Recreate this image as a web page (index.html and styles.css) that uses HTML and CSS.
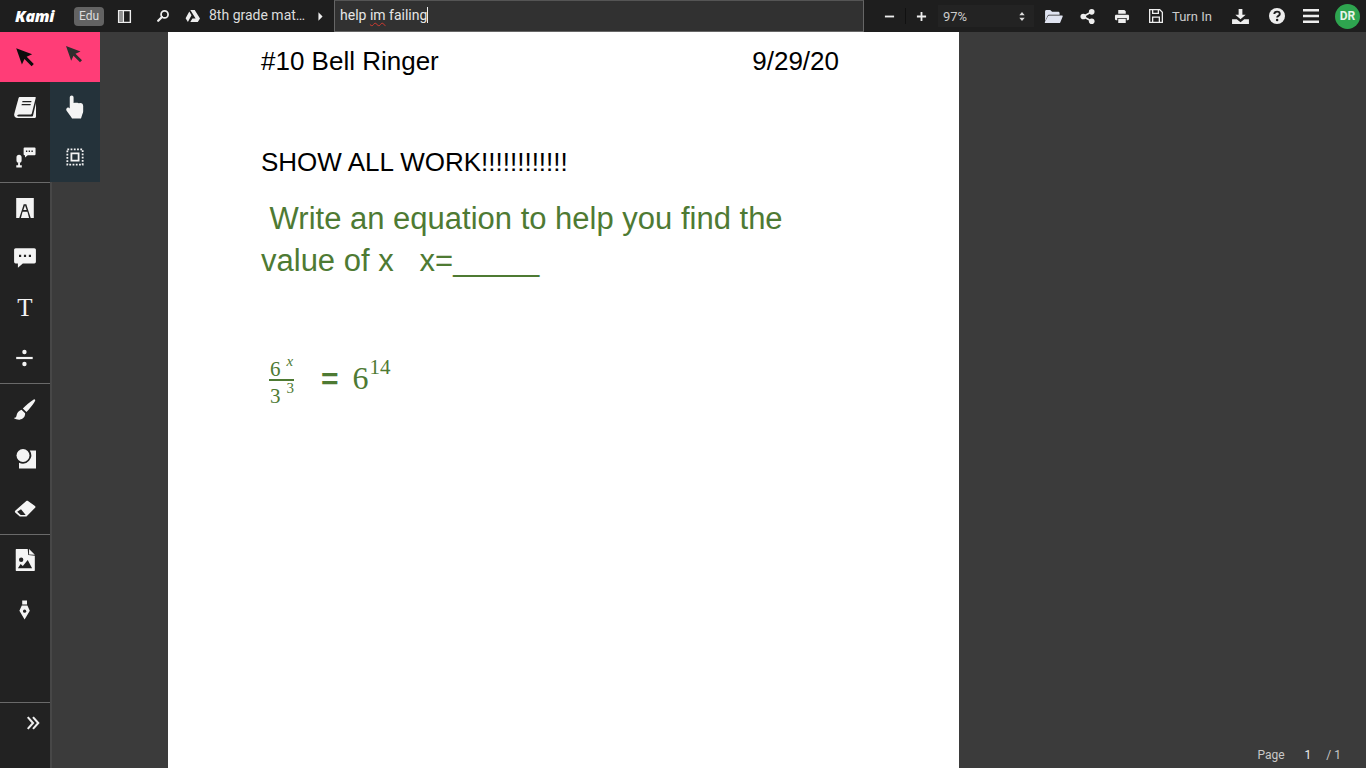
FILE: index.html
```html
<!DOCTYPE html>
<html lang="en">
<head>
<meta charset="utf-8">
<title>Kami</title>
<link rel="stylesheet" href="styles.css">
</head>
<body>
<div class="app">
  <header class="topbar">
    <span class="logo">Kami</span>
    <span class="edu">Edu</span>
    <svg class="ic panel-ic" viewBox="0 0 16 16"><path fill-rule="evenodd" d="M1 1h14v14H1zM2.500 2.500v11H6v-11zM7.500 2.500v11h6v-11z"/><path d="M2.500 2.500H6v11H2.500z" opacity=".55"/></svg>
    <svg class="ic search-ic" viewBox="0 0 16 16"><circle cx="9.800" cy="6.200" r="4" fill="none" stroke="#eee" stroke-width="2"/><path d="M6.800 9.200 2.500 13.500" stroke="#eee" stroke-width="2.600" stroke-linecap="round"/></svg>
    <svg class="ic drive-ic" viewBox="0 0 16 14"><path d="M5.300 1h4.400l5.300 8.500h-4.400zM4.300 2.600l2.200 3.700L2.900 13 .6 9.300zM7.400 9.500H15L12.800 13H5.300z"/></svg>
    <span class="docname">8th grade mat…</span>
    <svg class="ic caret-ic" viewBox="0 0 6 10"><path d="M.5 0 5.500 5 .5 10z"/></svg>
    <div class="titlebox"><span class="squig">help <u>im</u> failing</span><i class="cursor"></i></div>
    <svg class="ic zoom-ic" viewBox="0 0 12 12"><path d="M1 5h10v2H1z"/></svg>
    <i class="zoomsep"></i>
    <svg class="ic zoom-ic" viewBox="0 0 12 12"><path d="M5 1h2v4h4v2H7v4H5V7H1V5h4z"/></svg>
    <div class="zoomsel"><span>97%</span><svg class="updown" viewBox="0 0 6 10"><path d="M3 0 6 3.500H0zM3 10 0 6.500h6z"/></svg></div>
    <svg class="ic folder-ic" viewBox="0 0 20 16"><path d="M1 13V2.500C1 1.700 1.700 1 2.500 1h4L8.500 3H15c.8 0 1.500.7 1.500 1.500V6H5.500C4.700 6 4 6.500 3.700 7.200z"/><path d="M5 7h14c.6 0 1 .5.800 1.100l-2.600 6.200c-.2.400-.6.700-1 .7H1.500c-.6 0-1-.6-.7-1.100l3.200-6.300C4.200 7.200 4.600 7 5 7z"/></svg>
    <svg class="ic share-ic" viewBox="0 0 16 16"><circle cx="12.500" cy="3" r="3"/><circle cx="3.500" cy="8" r="3"/><circle cx="12.500" cy="13" r="3"/><path d="M12.500 3 3.500 8l9 5" fill="none" stroke="#eee" stroke-width="1.800"/></svg>
    <svg class="ic print-ic" viewBox="0 0 16 16"><path d="M4 1h6.500L12 2.500V5H4zM1.800 6h12.400c.7 0 1.300.6 1.300 1.300v3.400c0 .7-.6 1.300-1.300 1.300H13V9.500H3V12H1.800c-.7 0-1.300-.6-1.300-1.300V7.300C.5 6.600 1.100 6 1.800 6zM4 10.500h8V15H4z"/></svg>
    <svg class="ic save-ic" viewBox="0 0 16 16"><path fill-rule="evenodd" d="M1 1h11l3 3v11H1zM2.300 2.300v11.400h1.700V8.500h8v5.200h1.700V4.600l-2.300-2.300H11v3.700H4V2.300zM5.300 2.300v2.400h4.400V2.300zM5.300 9.800v3.900h5.400V9.800z"/></svg>
    <span class="turnin">Turn In</span>
    <svg class="ic dl-ic" viewBox="0 0 18 16"><path d="M7 0h4v6h3.500L9 11 3.500 6H7zM0 11h5l4 3 4-3h5v5H0z"/></svg>
    <svg class="ic help-ic" viewBox="0 0 16 16"><circle cx="8" cy="8" r="8"/><path d="M5.300 6c.1-1.600 1.300-2.400 2.800-2.400S10.800 4.500 10.800 6c0 1.900-2.700 1.900-2.700 3.600" fill="none" stroke="#1e1e1e" stroke-width="1.900"/><circle cx="8.100" cy="12" r="1.250" fill="#1e1e1e"/></svg>
    <svg class="ic bars-ic" viewBox="0 0 16 14"><path d="M0 0h16v2.600H0zM0 5.700h16v2.600H0zM0 11.400h16V14H0z"/></svg>
    <span class="avatar">DR</span>
  </header>
  <div class="workspace">
    <nav class="sidebar">
      <div class="btn active"><svg class="tool" viewBox="0 0 20 20"><path class="dark" d="M2 2l14.500 5.500-5 2.300 6.500 6.500-2 2-6.500-6.500-2.300 5z"/></svg></div>
      <div class="group">
        <div class="btn"><svg class="tool big" viewBox="0 0 24 24"><path d="M7 2h15c.6 0 .9.500.7 1l-3.900 15.500c-.2.600-.6.900-1.200.9H6c-1.300 0-1.800.9-1.800 1.300S4.700 21.400 6 21.400h13.200c.3 0 .6-.2.700-.5l3.100-13v13.600c0 .8-.6 1.500-1.400 1.500H4.500C2.500 23 1 21.600 1.200 19.800 1.300 18.600 5.500 3.800 5.500 3.200 5.700 2.500 6.300 2 7 2z"/><path class="cut" d="M9.500 6h9l-.3 1.300h-9zM8.800 9h9l-.3 1.300h-9z"/></svg></div>
        <div class="btn"><svg class="tool" viewBox="0 0 24 24"><path d="M5.500 9.500c1.700 0 2.800 1.300 2.800 2.800v3.400c0 1.600-1.100 2.800-2.800 2.800s-2.800-1.200-2.800-2.800v-3.400c0-1.500 1.100-2.800 2.800-2.800zM4.500 18.500h2V21h2v2.500H2.500V21h2z"/><path d="M11.500 1.500h11c.6 0 1 .4 1 1V9c0 .6-.4 1-1 1h-7.500l-3 2.500V10h-.5c-.6 0-1-.4-1-1V2.500c0-.6.400-1 1-1z"/><path class="cut" d="M13 5h1.500v1.500H13zM16 5h1.500v1.500H16zM19 5h1.500v1.500H19z"/></svg></div>
      </div>
      <i class="rule"></i>
      <div class="group">
        <div class="btn"><svg class="tool" viewBox="0 0 20 20"><path fill-rule="evenodd" d="M2 1h16v18h-2.800L12.400 10.500 11.200 6.500H8.800L7.600 10.500 4.800 19H2zM6.300 19h7.400l-1.500-5.500H7.800zM8.500 11.800h3L10 7.500z"/></svg></div>
        <div class="btn"><svg class="tool big" viewBox="0 0 22 20"><path fill-rule="evenodd" d="M2.500 1h17C20.500 1 21 1.700 21 2.500v11c0 .8-.5 1.500-1.500 1.500H9l-4.500 4v-4h-2C1.500 15 1 14.300 1 13.500v-11C1 1.700 1.500 1 2.500 1zM5.500 7v2h2V7zM10 7v2h2V7zM14.500 7v2h2V7z"/></svg></div>
        <div class="btn"><span class="t-glyph">T</span></div>
        <div class="btn"><svg class="tool" viewBox="0 0 20 20"><circle cx="9.500" cy="4.500" r="2"/><path d="M2 9h15v2H2z"/><circle cx="9.500" cy="15.500" r="2"/></svg></div>
      </div>
      <i class="rule"></i>
      <div class="group">
        <div class="btn"><svg class="tool big" viewBox="0 0 22 22"><path d="M19 2.200c.8-.5 1.700.4 1.300 1.200-1.800 3.400-5.500 8-8 10.400L9 10.500C11.500 8 15.700 4.200 19 2.200zM7.800 11.700l3.300 3.300c.2 3-1.800 5.600-5.100 5.800-1.800.1-3.900-.5-5.300-1.500 1.400 0 2.300-.6 2.500-2 .3-2.600 2-4.900 4.600-5.600z"/></svg></div>
        <div class="btn"><svg class="tool shape" viewBox="0 0 22 22"><path d="M14.800 2.500H21v18H4V14.800A8.500 8.500 0 0 0 14.800 2.500z"/><circle cx="8" cy="7.500" r="6.500"/></svg></div>
        <div class="btn"><svg class="tool" viewBox="0 0 22 22"><path fill-rule="evenodd" d="M14 3 21 8c.6.500.6 1.200.1 1.700L12.500 18.500H5.800L1.200 14.400c-.5-.5-.5-1.200 0-1.700L12.300 3.100C12.800 2.600 13.500 2.600 14 3zM7 11.300 3.200 13.700l3.500 3.200h5z"/></svg></div>
      </div>
      <i class="rule"></i>
      <div class="group">
        <div class="btn"><svg class="tool big" viewBox="0 0 20 22"><path fill-rule="evenodd" d="M2 1h10.500l.5 5.500 6 .5v13.500c0 .3-.2.500-.5.500h-16.500c-.3 0-.5-.2-.5-.5V1.500C1.500 1.200 1.700 1 2 1zM6.500 8.800a2 2 0 1 0 0 4 2 2 0 0 0 0-4zM12.500 11 8 16.500l-2-1.800-2.500 3.800h13z"/><path d="M13.700 1 19 6.200l-5.300-.2z"/></svg></div>
        <div class="btn"><svg class="tool pen" viewBox="0 0 20 26"><path d="M6.500 1h6v5h-6zM6 7.500h7l3 6.500-6.500 11L3 14z"/><circle class="cut" cx="9.500" cy="14.500" r="2"/></svg></div>
      </div>
      <div class="spacer"></div>
      <i class="rule"></i>
      <div class="expand"><svg class="chev" viewBox="0 0 12 12"><path d="M1.500 1 6 6l-4.500 5M6 1l4.500 5L6 11" fill="none" stroke="#eee" stroke-width="1.800"/></svg></div>
    </nav>
    <aside class="flyout">
      <div class="btn active"><svg class="tool small" viewBox="0 0 20 20"><path class="dim" d="M1 1l14.500 5.500-5 2.300 6.500 6.500-2 2-6.500-6.500-2.300 5z"/></svg></div>
      <div class="panel">
        <div class="btn"><svg class="tool big" viewBox="0 0 20 22"><path d="M7 .5c1 0 1.700.8 1.700 1.800v5l1-.3 1.200.2 1.300-.2 1.300.5 1.500-.1c1.400 0 2.500 1.200 2.500 2.600V15c0 1-.3 1.800-.7 2.500L15.500 21.500H7.300L6.300 20 2.300 14.500c-.6-.9-.4-2 .4-2.600.8-.6 1.900-.4 2.500.4V2.300c0-1 .8-1.800 1.800-1.800z"/></svg></div>
        <div class="btn"><svg class="tool select" viewBox="0 0 20 20"><path fill-rule="evenodd" d="M5 5h10v10H5zM7 7v6h6V7z"/><path class="dots" d="M1.500 1.500h17v17h-17z"/></svg></div>
      </div>
    </aside>
    <main class="canvas">
      <article class="sheet">
        <div class="headline"><span>#10 Bell Ringer</span><span>9/29/20</span></div>
        <p class="show">SHOW ALL WORK!!!!!!!!!!!!</p>
        <p class="question">&nbsp;Write an equation to help you find the<br>value of x &nbsp; x=_____</p>
        <div class="math">
          <div class="frac">
            <span class="num">6<sup class="varx">x</sup></span>
            <span class="den">3<sup>3</sup></span>
          </div>
          <span class="eq">=</span>
          <span class="big-num">6<sup>14</sup></span>
        </div>
      </article>
      <div class="pager"><span>Page</span><b>1</b><span>/ 1</span></div>
    </main>
  </div>
</div>
</body>
</html>
```
FILE: styles.css
```css
* { box-sizing: border-box; }
html, body { margin: 0; height: 100%; overflow: hidden; }
body { font-family: Roboto, "Liberation Sans", sans-serif; background: #3b3b3b; color: #eee; }
.app { display: flex; flex-direction: column; height: 768px; }

.topbar { height: 32px; flex: none; display: flex; align-items: center; background: #1e1e1e; font-size: 13px; color: #dcdcdc; }
.ic { display: block; flex: none; fill: #eee; }
.logo { width: 40px; margin-left: 15px; font: italic 800 16px "Open Sans", sans-serif; color: #fff; letter-spacing: -.3px; }
.edu { margin-left: 19px; width: 30px; height: 19px; line-height: 19px; text-align: center; border-radius: 4px; background: #636363; color: #ddd; font-size: 12px; }
.panel-ic { width: 15px; height: 15px; margin-left: 13px; }
.search-ic { width: 14px; height: 14px; margin-left: 24px; }
.drive-ic { width: 16px; height: 14px; margin-left: 15px; }
.docname { margin-left: 8px; width: 106px; font-size: 14px; white-space: nowrap; padding-bottom: 2px; }
.caret-ic { width: 5px; height: 9px; margin-left: 3px; }
.titlebox { margin-left: 11px; width: 530px; height: 32px; padding: 0 5px 3px; display: flex; align-items: center; background: #313131; border: 1px solid #666; border-top-color: #555; font-size: 14px; color: #e6e6e6; }
.squig u { text-decoration: underline wavy #d0392f 1px; text-underline-offset: 2px; }
.cursor { width: 1px; height: 16px; background: #eee; }
.zoom-ic { width: 11px; height: 11px; margin-left: 20px; }
.zoomsep { width: 1px; height: 16px; margin-left: 10px; background: #111; }
.zoomsep + .zoom-ic { margin-left: 10px; }
.zoomsel { margin-left: 11px; width: 96px; height: 22px; padding: 0 9px 0 5px; display: flex; align-items: center; justify-content: space-between; background: #232323; font-size: 13px; color: #ccc; }
.updown { width: 6px; height: 9px; fill: #ddd; }
.folder-ic { width: 19px; height: 15px; margin-left: 10px; fill: #dfe3f0; }
.share-ic { width: 15px; height: 15px; margin-left: 17px; }
.print-ic { width: 16px; height: 15px; margin-left: 19px; }
.save-ic { width: 16px; height: 16px; margin-left: 18px; }
.turnin { width: 40px; margin-left: 8px; font-size: 13px; white-space: nowrap; color: #ccc; }
.dl-ic { width: 17px; height: 15px; margin-left: 20px; }
.help-ic { width: 16px; height: 16px; margin-left: 20px; }
.bars-ic { width: 16px; height: 14px; margin-left: 18px; }
.avatar { width: 25px; height: 25px; margin-left: 16px; border-radius: 50%; background: #2ea44f; color: #e8f5e9; font-size: 12px; font-weight: 700; line-height: 25px; text-align: center; }

.workspace { flex: 1; display: flex; min-height: 0; }
.sidebar { width: 52px; flex: none; display: flex; flex-direction: column; background: #222; border-right: 2px solid #474747; }
.group { display: flex; flex-direction: column; }
.rule { display: block; height: 1px; flex: none; background: #6a6a6a; }
.spacer { flex: 1; }
.btn { width: 50px; height: 50px; display: flex; align-items: center; justify-content: center; flex: none; }
.btn.active { background: #ff3d77; }
.tool { display: block; width: 22px; height: 22px; fill: #f4f4f4; }
.tool.big { width: 24px; height: 24px; }
.tool.small { width: 20px; height: 20px; margin-top: -4px; }
.tool.shape { margin-left: 2px; }
.tool.pen { width: 16px; height: 24px; }
.tool .dark { fill: #0c0c0c; }
.tool .dim { fill: #2d2d2d; }
.tool .cut { fill: #222; }
.tool.select { width: 18px; height: 18px; }
.tool .dots { fill: none; stroke: #f4f4f4; stroke-width: 2; stroke-dasharray: 2 1.600; }
.t-glyph { font: 25px/1 "Liberation Serif", serif; color: #f4f4f4; margin-top: -2px; }
.expand { height: 65px; padding: 13px 10px 0 0; display: flex; align-items: flex-start; justify-content: flex-end; }
.chev { width: 14px; height: 14px; }
.flyout { width: 50px; margin-left: -2px; flex: none; display: flex; flex-direction: column; }
.panel { background: #24323a; }

.canvas { flex: 1; padding-left: 68px; position: relative; min-width: 0; }
.sheet { width: 791px; height: 736px; background: #fff; padding: 0 0 0 93px; font-family: "Liberation Sans", sans-serif; color: #000; }
.headline { width: 578px; display: flex; justify-content: space-between; padding-top: 12px; font-size: 26px; line-height: 34px; }
.show { margin: 67px 0 0; font-size: 26px; line-height: 34px; }
.question { margin: 19px 0 0; font-size: 31px; line-height: 42px; color: #4e7a33; }
.math { margin-top: 74px; margin-left: 8px; display: flex; align-items: center; font-family: "Liberation Serif", serif; color: #4e7a33; }
.frac { width: 25px; display: flex; flex-direction: column; font-size: 21px; }
.num { height: 25px; padding-left: 1px; line-height: 26px; border-bottom: 2px solid #4e7a33; }
.den { height: 26px; padding-left: 1px; line-height: 30px; }
.frac sup { font-size: 15px; line-height: 0; margin-left: 6px; vertical-align: 10px; }
.varx { font-style: italic; }
.eq { margin-left: 27px; margin-top: -5px; font: 700 30px/1 "Liberation Sans", sans-serif; }
.big-num { margin-left: 14px; font-size: 32px; line-height: 40px; margin-top: -8px; }
.big-num sup { font-size: 21px; line-height: 0; margin-left: 1px; vertical-align: 15px; }
.pager { position: absolute; right: 25px; bottom: 6px; display: flex; gap: 18px; font-size: 12px; line-height: 14px; color: #c8c8c8; }
.pager b { font-weight: 400; color: #eee; margin: 0 -3px 0 2px; }
```
